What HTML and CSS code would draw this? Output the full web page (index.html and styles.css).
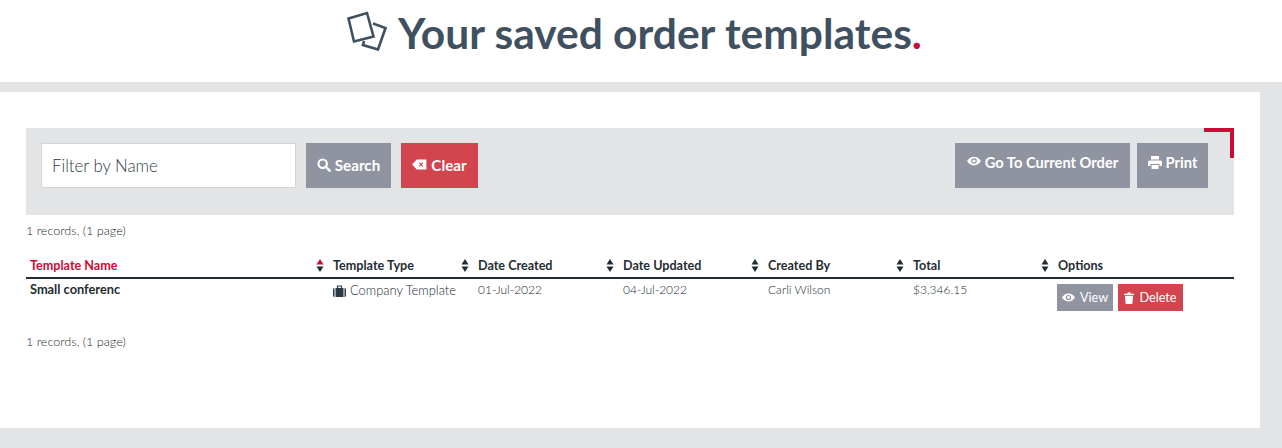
FILE: index.html
```html
<!DOCTYPE html>
<html lang="en">
<head>
<meta charset="utf-8">
<title>Your saved order templates</title>
<link rel="stylesheet" href="styles.css">
</head>
<body>
<header class="hero">
  <svg class="hero-icon" width="40" height="40" viewBox="0 0 40 40" fill="none" stroke="#3f5060" stroke-width="2.6"><path d="M1.500 7.500 20 2 26.500 25.500 7 30.500Z"/><path d="M26 12.500 38.500 17 31 38.500 16 34 17 30"/></svg>
  <h1 class="hero-title">Your saved order templates<span class="dot">.</span></h1>
</header>
<main class="panel">
  <section class="toolbar">
    <span class="corner"></span>
    <div class="filter">
      <input class="filter-input" type="text" placeholder="Filter by Name">
      <button class="btn btn-grey btn-search"><svg class="ico" viewBox="0 0 16 16" width="14" height="14"><circle cx="6.500" cy="6.500" r="4.800" fill="none" stroke="#fff" stroke-width="2.400"/><path d="M10 10l4.500 4.500" stroke="#fff" stroke-width="2.800" stroke-linecap="round"/></svg>Search</button>
      <button class="btn btn-red btn-clear"><svg class="ico" viewBox="0 0 16 12" width="15" height="11"><path d="M5 0.500h10.500v11H5L0 6Z" fill="#fff"/><path d="M8 4l3.600 4M11.600 4 8 8" stroke="#d2454f" stroke-width="1.300"/></svg>Clear</button>
    </div>
    <div class="actions">
      <button class="btn btn-grey btn-top btn-goto"><svg class="ico" viewBox="0 0 16 11" width="14" height="10"><path d="M0 5.500C2 2 5 .5 8 .5s6 1.500 8 5c-2 3.500-5 5-8 5s-6-1.500-8-5Z" fill="#fff"/><circle cx="8" cy="5.500" r="3.200" fill="#9094a0"/><circle cx="8" cy="5.500" r="1.800" fill="#fff"/></svg>Go To Current Order</button>
      <button class="btn btn-grey btn-top btn-print"><svg class="ico" viewBox="0 0 14 13" width="14" height="13"><path d="M3 0h8v3.500H3Z" fill="#fff"/><path d="M1.500 4.500h11A1.500 1.500 0 0 1 14 6v4h-2.500V8h-9v2H0V6a1.500 1.500 0 0 1 1.500-1.500Z" fill="#fff"/><path d="M3.500 9h7v4h-7Z" fill="#fff"/></svg>Print</button>
    </div>
  </section>
  <p class="records">1 records, (1 page)</p>
  <table class="grid">
    <thead>
      <tr>
        <th class="col-name active"><div class="th-in"><span>Template Name</span><svg class="sort" viewBox="0 0 8 15" width="8" height="15"><path d="M4 1 7.500 6.500H.5Z" fill="#cc0a35"/><path d="M4 14 .5 8.500h7Z" fill="#1f2d33"/></svg></div></th>
        <th class="col"><div class="th-in"><span>Template Type</span><svg class="sort" viewBox="0 0 8 15" width="8" height="15"><path d="M4 1 7.500 6.500H.5Z"/><path d="M4 14 .5 8.500h7Z"/></svg></div></th>
        <th class="col"><div class="th-in"><span>Date Created</span><svg class="sort" viewBox="0 0 8 15" width="8" height="15"><path d="M4 1 7.500 6.500H.5Z"/><path d="M4 14 .5 8.500h7Z"/></svg></div></th>
        <th class="col"><div class="th-in"><span>Date Updated</span><svg class="sort" viewBox="0 0 8 15" width="8" height="15"><path d="M4 1 7.500 6.500H.5Z"/><path d="M4 14 .5 8.500h7Z"/></svg></div></th>
        <th class="col"><div class="th-in"><span>Created By</span><svg class="sort" viewBox="0 0 8 15" width="8" height="15"><path d="M4 1 7.500 6.500H.5Z"/><path d="M4 14 .5 8.500h7Z"/></svg></div></th>
        <th class="col"><div class="th-in"><span>Total</span><svg class="sort" viewBox="0 0 8 15" width="8" height="15"><path d="M4 1 7.500 6.500H.5Z"/><path d="M4 14 .5 8.500h7Z"/></svg></div></th>
        <th class="col-options">Options</th>
      </tr>
    </thead>
    <tbody>
      <tr>
        <td class="cell-name">Small conferenc</td>
        <td class="cell-type"><svg class="case" viewBox="0 0 13 12" width="13" height="12"><path d="M2.500 3h8v9h-8Z" fill="#2b3a44"/><path d="M0 4.500A1.500 1.500 0 0 1 1.500 3v9A1.500 1.500 0 0 1 0 10.500ZM13 4.500A1.500 1.500 0 0 0 11.500 3v9a1.500 1.500 0 0 0 1.500-1.500Z" fill="#2b3a44"/><path d="M4.500 3V1h4v2" fill="none" stroke="#2b3a44" stroke-width="1.200"/></svg>Company Template</td>
        <td>01-Jul-2022</td>
        <td>04-Jul-2022</td>
        <td>Carli Wilson</td>
        <td>$3,346.15</td>
        <td class="cell-options">
          <div class="mini-row">
            <a class="mini mini-grey"><svg class="ico-s" viewBox="0 0 16 11" width="13" height="9"><path d="M0 5.500C2 2 5 .5 8 .5s6 1.500 8 5c-2 3.500-5 5-8 5s-6-1.500-8-5Z" fill="#fff"/><circle cx="8" cy="5.500" r="3.200" fill="#9094a0"/><circle cx="8" cy="5.500" r="1.800" fill="#fff"/></svg>View</a>
            <a class="mini mini-red"><svg class="ico-s" viewBox="0 0 11 13" width="10" height="12"><path d="M0 1.800h11v1.500H0ZM3.500 1.800 4.200.3h2.600l.7 1.500Z" fill="#fff"/><path d="M1 4h9l-.7 8a1 1 0 0 1-1 1H2.700a1 1 0 0 1-1-1Z" fill="#fff"/></svg>Delete</a>
          </div>
        </td>
      </tr>
    </tbody>
  </table>
  <p class="records records-bottom">1 records, (1 page)</p>
</main>
</body>
</html>
```

FILE: styles.css
```css
* { box-sizing: border-box; }
html, body { margin: 0; padding: 0; }
body {
  background: #e3e4e6;
  font-family: "Lato", "Liberation Sans", sans-serif;
  color: #3f5060;
  height: 448px;
  overflow: hidden;
}
.hero {
  background: #fff;
  height: 82px;
  display: flex;
  justify-content: center;
  align-items: flex-start;
  gap: 11px;
  padding: 10px 13px 0 0;
}
.hero-icon { flex: none; margin-top: 1px; }
.hero-title {
  margin: 0;
  font-size: 42.500px;
  line-height: 46px;
  font-weight: 700;
  color: #3f5060;
  font-family: "Lato", sans-serif;
  white-space: nowrap;
}
.dot { color: #cc0a35; }
.panel {
  background: #fff;
  width: 1260px;
  height: 336px;
  margin-top: 10px;
  padding: 36px 26px 0;
}
.toolbar {
  position: relative;
  background: #e3e4e6;
  height: 87px;
  padding: 15px 26px 0 15px;
  display: flex;
  justify-content: space-between;
  align-items: flex-start;
}
.corner {
  position: absolute;
  top: 0;
  right: 0;
  width: 30px;
  height: 30px;
  border-top: 4px solid #cc0a35;
  border-right: 4px solid #cc0a35;
}
.filter { display: flex; align-items: flex-start; }
.filter-input {
  width: 255px;
  height: 45px;
  border: 1px solid #d4d5d8;
  background: #fff;
  padding: 0 10px;
  font: 300 16.800px "Lato", sans-serif;
  color: #3f5060;
  outline: none;
}
.filter-input::placeholder { color: #2f3b46; opacity: 1; }
.btn {
  height: 45px;
  border: 0;
  color: #fff;
  font: 700 15.200px "Lato", sans-serif;
  display: inline-flex;
  align-items: center;
  justify-content: center;
  gap: 4px;
  padding: 0 0 2px;
}
.btn-grey { background: #9094a0; }
.btn-red { background: #d2454f; }
.btn-search { width: 85px; margin-left: 10px; }
.btn-clear { width: 77px; margin-left: 10px; }
.btn-top { align-items: flex-start; padding: 10px 0 0; line-height: 19px; font-size: 14.700px; }
.btn-top .ico { margin-top: 3px; }
.btn-goto { width: 175px; }
.btn-print { width: 71px; margin-left: 7px; }
.actions { display: flex; align-items: flex-start; }
.ico { flex: none; }
.records {
  margin: 8px 0 0;
  font-size: 12.600px;
  line-height: 16px;
  font-weight: 300;
  color: #222b30;
}
.grid {
  width: 1208px;
  margin-top: 17px;
  border-collapse: collapse;
  table-layout: fixed;
}
.grid th {
  height: 22px;
  padding: 0 4px 2px;
  text-align: left;
  font-size: 12.600px;
  font-weight: 700;
  color: #1f2d33;
  border-bottom: 2px solid #1f2d33;
}
.col-name { width: 303px; }
.col { width: 145px; }
.col-options { width: 180px; }
.th-in { display: flex; justify-content: space-between; align-items: center; }
.sort { fill: #1f2d33; flex: none; margin-right: 1px; }
.grid th.active { color: #cc0a35; }
.grid td {
  padding: 3px 4px 0;
  height: 48px;
  vertical-align: top;
  font-size: 12px;
  line-height: 15px;
  font-weight: 300;
  color: #222b30;
}
.grid td.cell-name { font-weight: 700; font-size: 12.800px; color: #1f2d33; }
.grid td.cell-type { white-space: nowrap; font-size: 12.900px; padding-top: 4px; }
.case { margin-right: 4px; vertical-align: -2px; }
.grid td.cell-options { padding: 5px 0 0 3px; }
.mini-row { display: flex; gap: 5px; }
.mini {
  display: inline-flex;
  align-items: center;
  justify-content: center;
  gap: 5px;
  height: 27px;
  color: #fff;
  font-size: 12.700px;
  font-weight: 400;
}
.mini-grey { background: #9094a0; width: 56px; }
.mini-red { background: #d2454f; width: 65px; }
.ico-s { flex: none; }
.records-bottom { margin-top: 8px; }
```
